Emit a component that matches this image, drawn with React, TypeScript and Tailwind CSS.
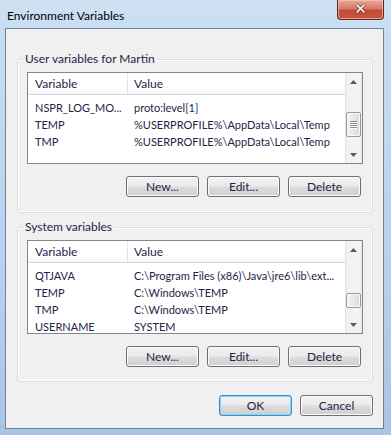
import React from "react";

const Arrow = ({ dir }: { dir: "up" | "down" }) => (
  <svg width="7" height="4" viewBox="0 0 7 4">
    {dir === "up" ? (
      <polygon points="3.5,0 7,4 0,4" fill="#5a5a5a" />
    ) : (
      <polygon points="0,0 7,0 3.5,4" fill="#5a5a5a" />
    )}
  </svg>
);

const ScrollBar = ({ thumbTop, thumbH, grip }: { thumbTop: number; thumbH: number; grip: boolean }) => (
  <div className="w-[17px] shrink-0 h-full flex flex-col bg-[linear-gradient(90deg,#e3e3e3_0%,#f2f2f2_15%,#f4f4f4_85%,#e6e6e6_100%)]">
    <div className="h-[17px] flex items-center justify-center">
      <Arrow dir="up" />
    </div>
    <div className="flex-1 flex flex-col">
      <div
        className="mx-[1px] rounded-[2px] border border-[#9b9b9b] bg-[linear-gradient(90deg,#f4f4f4_0%,#e8e8e8_50%,#d8d8d8_100%)] shadow-[inset_0_0_0_1px_#fafafa] flex flex-col items-center justify-center gap-[1px]"
        style={{ marginTop: thumbTop, height: thumbH }}
      >
        {grip &&
          [0, 1, 2, 3].map((i) => (
            <div key={i} className="w-[7px] h-[1px] bg-[#8a8a8a] shadow-[0_1px_0_#ffffff]" />
          ))}
      </div>
    </div>
    <div className="h-[17px] flex items-center justify-center">
      <Arrow dir="down" />
    </div>
  </div>
);

const ListView = ({
  rows,
  height,
  rowPad,
  thumbTop,
  thumbH,
  grip,
}: {
  rows: [string, string][];
  height: number;
  rowPad: number;
  thumbTop: number;
  thumbH: number;
  grip: boolean;
}) => (
  <div className="border border-[#828790] bg-white flex overflow-hidden" style={{ height }}>
    <div className="flex-1 flex flex-col min-w-0 overflow-hidden">
      <div className="h-[22px] shrink-0 flex border-b border-[#d5d5d5] bg-[linear-gradient(180deg,#ffffff_0%,#ffffff_60%,#f7f8fa_100%)] text-[#1e2545]">
        <div className="w-[100px] shrink-0 border-r border-[#e5e5e5] pl-[7px] flex items-center">Variable</div>
        <div className="flex-1 pl-[6px] flex items-center">Value</div>
      </div>
      <div className="flex flex-col text-[11px]" style={{ paddingTop: rowPad }}>
        {rows.map(([a, b]) => (
          <div key={a} className="h-[17px] shrink-0 flex items-center text-[#1e2545] whitespace-nowrap">
            <div className="w-[100px] shrink-0 pl-[7px]">{a}</div>
            <div className="flex-1 min-w-0 pl-[6px]">{b}</div>
          </div>
        ))}
      </div>
    </div>
    <ScrollBar thumbTop={thumbTop} thumbH={thumbH} grip={grip} />
  </div>
);

const Btn = ({ label, def }: { label: string; def?: boolean }) => (
  <div
    className={
      "w-[73px] h-[21px] rounded-[3px] border flex items-center justify-center text-[#1e2545] bg-[linear-gradient(180deg,#f2f2f2_0%,#ebebeb_48%,#dddddd_52%,#cfcfcf_100%)] " +
      (def
        ? "border-[#3c8fc0] shadow-[inset_0_0_0_1px_#7fd8f8]"
        : "border-[#707070] shadow-[inset_0_0_0_1px_#fbfbfb]")
    }
  >
    {label}
  </div>
);

const Group = ({ title, children, h }: { title: string; children: React.ReactNode; h: number }) => (
  <div
    className="relative rounded-[3px] border border-[#d5dfe5] shadow-[inset_0_0_0_1px_#ffffff] pt-[12px] pl-[9px] pr-[9px] flex flex-col"
    style={{ height: h }}
  >
    <span className="absolute left-[5px] top-[-9px] px-[2px] bg-[#f0f0f0] text-[#1e2545] leading-[15px]">{title}</span>
    {children}
  </div>
);

export default function App() {
  return (
    <div className="w-[391px] h-[435px] flex flex-col pl-[5px] pr-[7px] pb-[6px] bg-[linear-gradient(180deg,#cfe2f4_0%,#c6dcf2_8%,#b8d2ee_60%,#a8c5e6_100%)] font-['Lato','Noto_Sans',sans-serif] text-[12px] leading-[15px] overflow-hidden">
      <div className="h-[28px] flex items-start">
        <span className="pl-[2px] mt-[8px] text-black">Environment Variables</span>
        <div className="ml-auto w-[47px] h-[20px] rounded-b-[4px] border border-t-0 border-[#5b2a22] bg-[linear-gradient(180deg,#e9a99b_0%,#d7796a_45%,#c44a36_55%,#c7563f_100%)] shadow-[inset_0_0_0_1px_rgba(255,200,190,0.6)] flex items-center justify-center">
          <span className="text-white font-bold text-[15px] leading-[15px] [text-shadow:0_0_2px_#4a1510,0_0_1px_#4a1510] font-['DejaVu_Sans',sans-serif]">✕</span>
        </div>
      </div>
      <div className="flex-1 border border-[#6d849c] bg-[#f0f0f0] flex flex-col pl-[11px] pr-[10px] pt-[30px]">
        <Group title="User variables for Martin" h={154}>
          <ListView
            height={92}
            rowPad={4}
            thumbTop={22}
            thumbH={25}
            grip
            rows={[
              ["NSPR_LOG_MO...", "proto:level[1]"],
              ["TEMP", "%USERPROFILE%\\AppData\\Local\\Temp"],
              ["TMP", "%USERPROFILE%\\AppData\\Local\\Temp"],
            ]}
          />
          <div className="mt-[12px] flex justify-end gap-[8px] pr-[2px]">
            <Btn label="New..." />
            <Btn label="Edit..." />
            <Btn label="Delete" />
          </div>
        </Group>
        <div className="mt-[14px]">
          <Group title="System variables" h={155}>
            <ListView
              height={94}
              rowPad={4}
              thumbTop={35}
              thumbH={15}
              grip={false}
              rows={[
                ["QTJAVA", "C:\\Program Files (x86)\\Java\\jre6\\lib\\ext..."],
                ["TEMP", "C:\\Windows\\TEMP"],
                ["TMP", "C:\\Windows\\TEMP"],
                ["USERNAME", "SYSTEM"],
              ]}
            />
            <div className="mt-[12px] flex justify-end gap-[8px] pr-[2px]">
              <Btn label="New..." />
              <Btn label="Edit..." />
              <Btn label="Delete" />
            </div>
          </Group>
        </div>
        <div className="mt-[13px] flex justify-end gap-[8px]">
          <Btn label="OK" def />
          <Btn label="Cancel" />
        </div>
      </div>
    </div>
  );
}
